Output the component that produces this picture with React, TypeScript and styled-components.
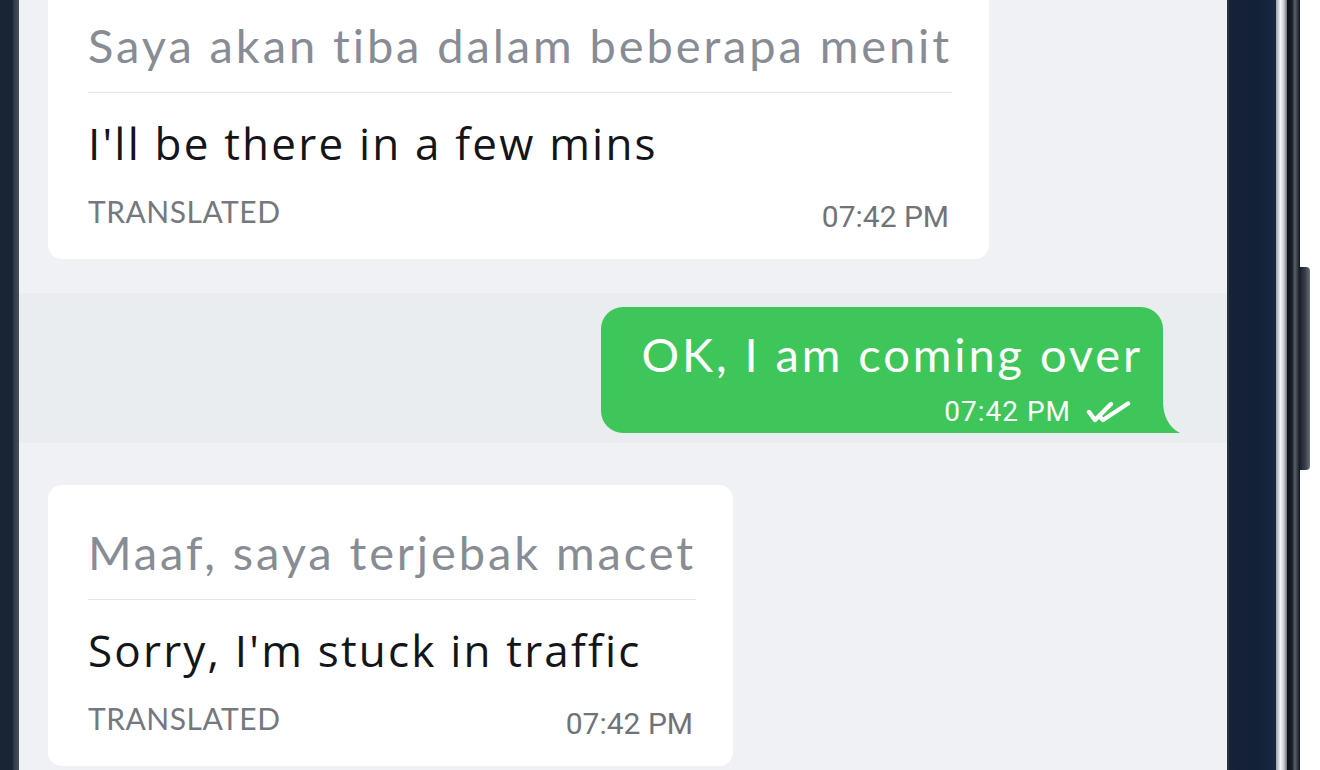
import React from "react";
import styled, { createGlobalStyle } from "styled-components";

const GlobalStyle = createGlobalStyle`
  html, body { margin: 0; padding: 0; background: #ffffff; overflow: hidden; }
  * { box-sizing: border-box; }
`;

const Device = styled.div`
  display: flex;
  width: 1320px;
  height: 770px;
  overflow: hidden;
  background: #ffffff;
`;

const Strip = styled.div<{ $w: number; $bg: string }>`
  flex: 0 0 ${(p) => p.$w}px;
  height: 100%;
  background: ${(p) => p.$bg};
`;

const Screen = styled.main`
  flex: 0 0 1208px;
  height: 100%;
  background: #eff1f4;
  overflow: hidden;
  display: flex;
  flex-direction: column;
`;

const Thread = styled.div`
  display: flex;
  flex-direction: column;
  margin-top: -22px;
`;

const IncomingRow = styled.div<{ $mt: number }>`
  display: flex;
  padding-left: 29px;
  margin-top: ${(p) => p.$mt}px;
`;

const OutgoingRow = styled.div`
  display: flex;
  justify-content: flex-end;
  background: #e9edf0;
  padding: 14px 64px 10px 0;
  margin-top: 34px;
`;

const Card = styled.div`
  background: #ffffff;
  border-radius: 14px;
  padding: 39px 37px 24px 40px;
  display: flex;
  flex-direction: column;
`;

const Original = styled.div`
  font-family: Lato, "Liberation Sans", sans-serif;
  font-size: 47px;
  letter-spacing: 2.9px;
  line-height: 56px;
  color: #888c94;
  padding-bottom: 19px;
  border-bottom: 1.5px solid #e3e6ea;
  white-space: nowrap;
`;

const Translation = styled.div`
  font-family: "Open Sans", "Liberation Sans", sans-serif;
  font-size: 44px;
  letter-spacing: 2.2px;
  line-height: 52px;
  color: #141518;
  margin-top: 24px;
  white-space: nowrap;
`;

const Footer = styled.div`
  display: flex;
  justify-content: space-between;
  align-items: flex-start;
  margin-top: 24px;
  padding-right: 3px;
`;

const Label = styled.span`
  font-family: Lato, "Liberation Sans", sans-serif;
  font-size: 30px;
  line-height: 36px;
  color: #74787f;
  letter-spacing: 0.5px;
`;

const Time = styled.span<{ $light?: boolean }>`
  font-family: Roboto, "Liberation Sans", sans-serif;
  font-size: ${(p) => (p.$light ? 28 : 30)}px;
  letter-spacing: ${(p) => (p.$light ? 1 : 0)}px;
  line-height: ${(p) => (p.$light ? 32 : 36)}px;
  color: ${(p) => (p.$light ? "#ffffff" : "#6f737a")};
  padding-top: ${(p) => (p.$light ? 0 : 6)}px;
`;

const Bubble = styled.div`
  position: relative;
  background: #3ec65b;
  border-radius: 22px 22px 0 22px;
  padding: 19px 20px 5px 40px;
  display: flex;
  flex-direction: column;
`;

const BubbleText = styled.div`
  font-family: Lato, "Liberation Sans", sans-serif;
  font-size: 47px;
  letter-spacing: 2.9px;
  line-height: 56px;
  color: #ffffff;
  white-space: nowrap;
`;

const BubbleMeta = styled.div`
  display: flex;
  justify-content: flex-end;
  align-items: center;
  gap: 15px;
  margin-top: 14px;
  margin-right: 12px;
`;

const Tail = styled.svg`
  position: absolute;
  right: -17px;
  bottom: 0;
  display: block;
`;

const Outside = styled.div`
  flex: 1;
  height: 100%;
  display: flex;
  flex-direction: column;
  padding-top: 267px;
`;

const SideButton = styled.div`
  width: 10px;
  height: 203px;
  background: linear-gradient(90deg, #1b202a 0%, #3b414c 55%, #6b717b 100%);
  border-radius: 0 4px 4px 0;
`;

const DoubleCheck = () => (
  <svg width="45" height="22" viewBox="0 0 45 22" fill="none">
    <polyline
      points="3,11 9,19 25,3"
      stroke="#ffffff"
      strokeWidth="4.4"
      strokeLinecap="round"
      strokeLinejoin="round"
    />
    <polyline
      points="14,16 17,19 42,2.5"
      stroke="#ffffff"
      strokeWidth="4.4"
      strokeLinecap="round"
      strokeLinejoin="round"
    />
  </svg>
);

type Msg = { original: string; translation: string; time: string };

const IncomingCard = ({ m }: { m: Msg }) => (
  <Card>
    <Original>{m.original}</Original>
    <Translation>{m.translation}</Translation>
    <Footer>
      <Label>TRANSLATED</Label>
      <Time>{m.time}</Time>
    </Footer>
  </Card>
);

export default function App() {
  return (
    <>
      <GlobalStyle />
      <Device>
        <Strip $w={13} $bg="#1a2434" />
        <Strip $w={6} $bg="linear-gradient(90deg,#2e3642,#4a515d)" />
        <Screen>
          <Thread>
            <IncomingRow $mt={0}>
              <IncomingCard
                m={{
                  original: "Saya akan tiba dalam beberapa menit",
                  translation: "I'll be there in a few mins",
                  time: "07:42 PM",
                }}
              />
            </IncomingRow>
            <OutgoingRow>
              <Bubble>
                <BubbleText>OK, I am coming over</BubbleText>
                <BubbleMeta>
                  <Time $light>07:42 PM</Time>
                  <DoubleCheck />
                </BubbleMeta>
                <Tail width="30" height="30" viewBox="0 0 30 30">
                  <path d="M0 0 L13 0 C13.5 12 18 24 30 30 L0 30 Z" fill="#3ec65b" />
                </Tail>
              </Bubble>
            </OutgoingRow>
            <IncomingRow $mt={42}>
              <IncomingCard
                m={{
                  original: "Maaf, saya terjebak macet",
                  translation: "Sorry, I'm stuck in traffic",
                  time: "07:42 PM",
                }}
              />
            </IncomingRow>
          </Thread>
        </Screen>
        <Strip $w={2} $bg="#2a3240" />
        <Strip $w={47} $bg="linear-gradient(90deg,#16223a,#122038 60%,#1a2740)" />
        <Strip $w={11} $bg="linear-gradient(90deg,#9aa0aa,#f4f5f7 40%,#c9ccd2 70%,#6c717b)" />
        <Strip $w={13} $bg="linear-gradient(90deg,#0c111b,#1a1f29 40%,#5a5f68 60%,#10151e)" />
        <Outside>
          <SideButton />
        </Outside>
      </Device>
    </>
  );
}
